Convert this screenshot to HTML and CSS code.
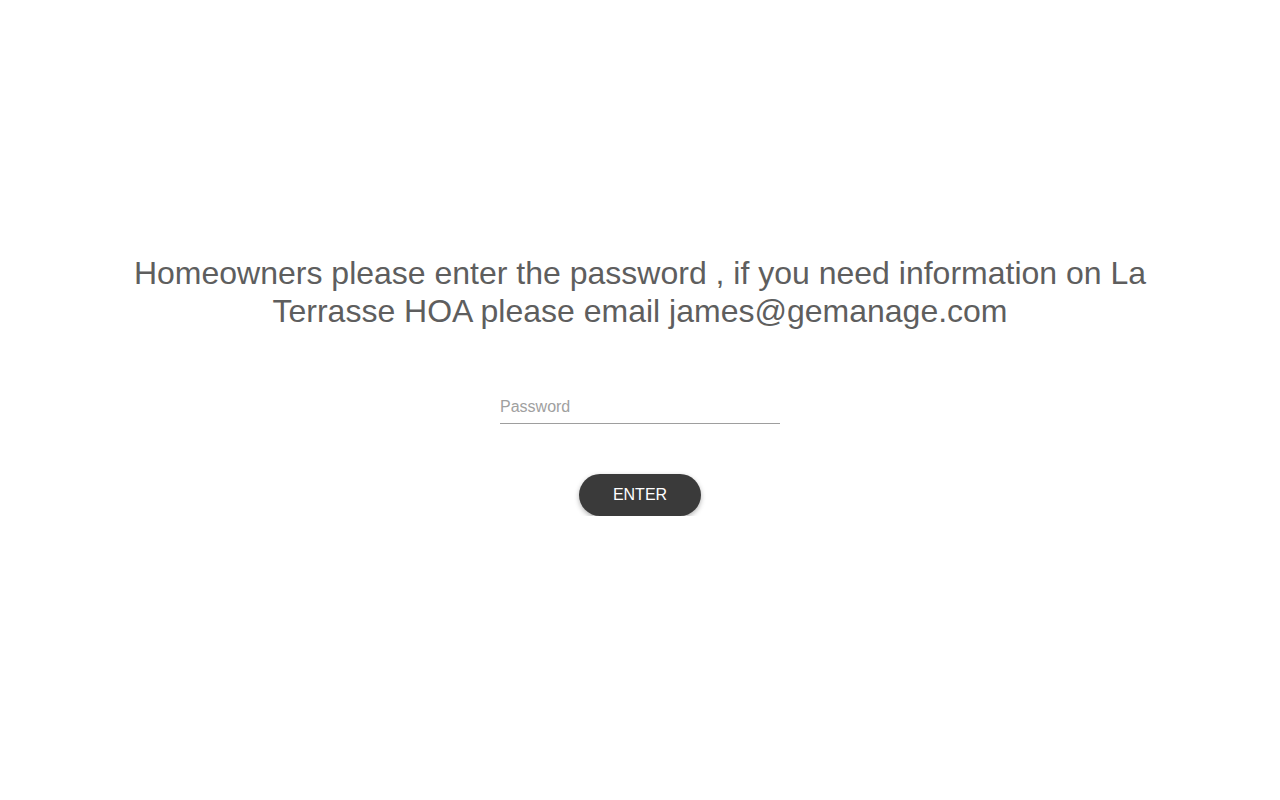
FILE: index.html
```html
<!DOCTYPE html>
<html>
<head>
<meta charset="utf-8">
<link rel="stylesheet" href="styles.css">
</head>
<body>
<main class="page">
  <h1 class="intro">Homeowners please enter the password , if you need information on La Terrasse HOA please email james@gemanage.com</h1>
  <form class="login">
    <input class="password" type="password" placeholder="Password">
    <button class="enter" type="button">ENTER</button>
  </form>
</main>
</body>
</html>
```

FILE: styles.css
```css
html, body {
  margin: 0;
  padding: 0;
  background: #fff;
}
body {
  font-family: "Liberation Sans", Arial, sans-serif;
}
.page {
  display: flex;
  flex-direction: column;
  align-items: center;
  padding-top: 254px;
}
.intro {
  margin: 0;
  width: 1060px;
  font-size: 32px;
  line-height: 38px;
  font-weight: normal;
  color: #5e5e5e;
  text-align: center;
}
.login {
  display: flex;
  flex-direction: column;
  align-items: center;
  margin-top: 64px;
}
.password {
  box-sizing: border-box;
  width: 280px;
  height: 30px;
  border: none;
  border-bottom: 1px solid #9e9e9e;
  padding: 0 0 4px 0;
  font-family: "Liberation Sans", Arial, sans-serif;
  font-size: 16px;
  color: #333;
  outline: none;
  background: transparent;
}
.password::placeholder {
  color: #a0a0a0;
}
.enter {
  margin-top: 50px;
  width: 122px;
  height: 42px;
  border: none;
  border-radius: 21px;
  background: #3a3a3a;
  color: #fff;
  font-family: "Liberation Sans", Arial, sans-serif;
  font-size: 16px;
  box-shadow: 0 2px 5px rgba(0,0,0,0.3);
  cursor: pointer;
}
```
